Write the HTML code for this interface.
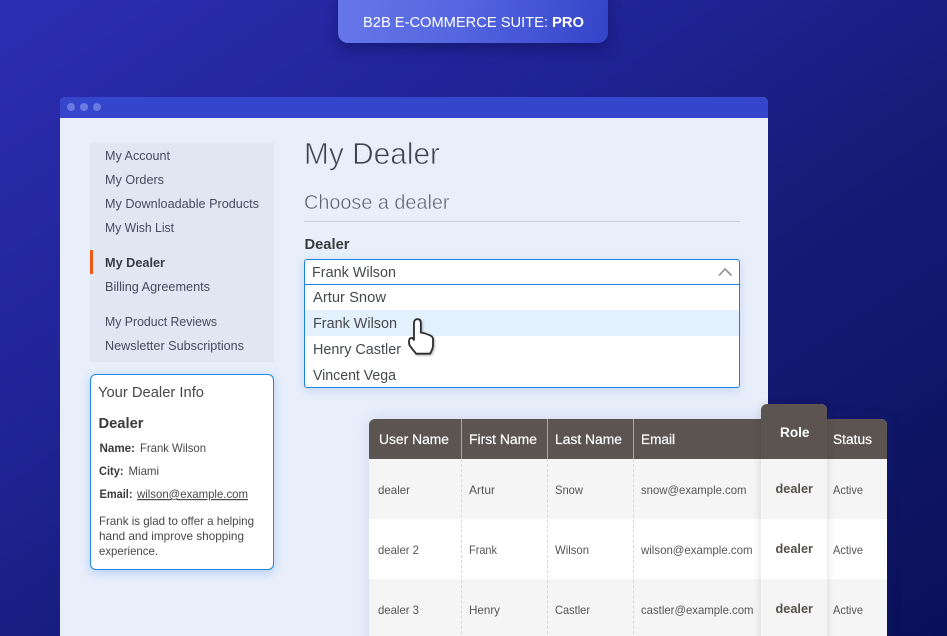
<!DOCTYPE html>
<html lang="en"><head><meta charset="utf-8"><title>B2B E-Commerce Suite</title>
<style>
html,body{margin:0;padding:0;width:947px;height:636px;overflow:hidden}
body{position:relative;background:linear-gradient(to bottom right,#2c2eb2 0%,#1d2290 40%,#161c78 58%,#0a1058 100%)}
div{position:absolute;box-sizing:border-box}
svg{position:absolute;left:0;top:0}
text{font-family:"Liberation Sans",sans-serif;white-space:pre}
.s{font-size:13px;fill:#454b5c}
.o{font-size:14.5px;fill:#45484f}
.t{font-size:12px;fill:#555}
.h{font-size:13.5px;fill:#fff;stroke:#fff;stroke-width:.2}
.r{font-size:12.5px;font-weight:bold;fill:#55504c}
.d{font-size:12px;fill:#484848}
.db{font-size:12px;fill:#3a3a3a;font-weight:bold}
</style></head><body>
<div style="left:338px;top:-10px;width:270px;height:53px;border-radius:10px;background:linear-gradient(100deg,#6777ea 0%,#5566e0 45%,#3344c9 100%);box-shadow:0 6px 14px rgba(8,12,70,.45)"></div>

<div style="left:60px;top:97px;width:708px;height:560px;background:#e8effb;border-radius:6px 6px 0 0;overflow:hidden">
  <div style="left:0;top:0;width:708px;height:21px;background:#3546cd"></div>
  <div style="left:7px;top:6px;width:8px;height:8px;border-radius:50%;background:#6b79e2"></div>
  <div style="left:20px;top:6px;width:8px;height:8px;border-radius:50%;background:#6b79e2"></div>
  <div style="left:33px;top:6px;width:8px;height:8px;border-radius:50%;background:#6b79e2"></div>
</div>

<div style="left:90px;top:143px;width:184px;height:219px;background:#e0e6f2"></div>
<div style="left:90px;top:250px;width:3px;height:24px;background:#ee5a14"></div>

<div style="left:90px;top:374px;width:184px;height:196px;background:#fff;border:1px solid #1f88e3;border-radius:6px;box-shadow:0 3px 10px rgba(60,130,230,.3)"></div>

<div style="left:304px;top:221px;width:436px;height:1px;background:#c9ced9"></div>

<div style="left:304px;top:259px;width:436px;height:129px;background:#fff;border:1px solid #1c82e0;border-radius:3px;box-shadow:0 3px 10px rgba(60,110,200,.18)"></div>
<div style="left:304px;top:284px;width:436px;height:1px;background:#1c82e0"></div>
<div style="left:305px;top:310px;width:434px;height:26px;background:#e3f1fd"></div>

<div style="left:369px;top:419px;width:518px;height:240px;background:#fff;border-radius:6px 6px 0 0;overflow:hidden;box-shadow:0 0 16px rgba(40,60,130,.13)">
  <div style="left:0;top:0;width:518px;height:40px;background:#5c5450"></div>
  <div style="left:0;top:40px;width:518px;height:60px;background:#f5f5f5"></div>
  <div style="left:0;top:160px;width:518px;height:60px;background:#f5f5f5"></div>
  <div style="left:92px;top:0;width:1px;height:40px;background:#aaa6a3"></div>
  <div style="left:178px;top:0;width:1px;height:40px;background:#aaa6a3"></div>
  <div style="left:264px;top:0;width:1px;height:40px;background:#aaa6a3"></div>
  <div style="left:92px;top:40px;height:200px;border-left:1px dashed #d8d8d8"></div>
  <div style="left:178px;top:40px;height:200px;border-left:1px dashed #d8d8d8"></div>
  <div style="left:264px;top:40px;height:200px;border-left:1px dashed #d8d8d8"></div>
</div>

<div style="left:761px;top:404px;width:66px;height:260px;border-radius:6px 6px 0 0;overflow:hidden;box-shadow:0 0 9px rgba(0,0,0,.14);background:#fff">
  <div style="left:0;top:0;width:66px;height:55px;background:#5c5450"></div>
  <div style="left:0;top:55px;width:66px;height:60px;background:#f5f5f5"></div>
  <div style="left:0;top:175px;width:66px;height:60px;background:#f5f5f5"></div>
</div>

<svg width="947" height="636" viewBox="0 0 947 636" xmlns="http://www.w3.org/2000/svg">
<text x="363" y="27" font-size="15" fill="#fff" textLength="185" lengthAdjust="spacingAndGlyphs">B2B E-COMMERCE SUITE:</text>
<text x="552" y="27" font-size="15" font-weight="bold" fill="#fff" textLength="32" lengthAdjust="spacingAndGlyphs">PRO</text>

<text class="s" x="105" y="160" textLength="65" lengthAdjust="spacingAndGlyphs">My Account</text>
<text class="s" x="105" y="184" textLength="59" lengthAdjust="spacingAndGlyphs">My Orders</text>
<text class="s" x="105" y="208" textLength="154" lengthAdjust="spacingAndGlyphs">My Downloadable Products</text>
<text class="s" x="105" y="232" textLength="69" lengthAdjust="spacingAndGlyphs">My Wish List</text>
<text class="s" x="105" y="267" font-weight="bold" style="fill:#363b4a" textLength="60" lengthAdjust="spacingAndGlyphs">My Dealer</text>
<text class="s" x="105" y="291" textLength="105" lengthAdjust="spacingAndGlyphs">Billing Agreements</text>
<text class="s" x="105" y="326" textLength="112" lengthAdjust="spacingAndGlyphs">My Product Reviews</text>
<text class="s" x="105" y="350" textLength="139" lengthAdjust="spacingAndGlyphs">Newsletter Subscriptions</text>

<text x="98" y="397" font-size="15" fill="#48484c" textLength="106" lengthAdjust="spacingAndGlyphs">Your Dealer Info</text>
<text x="98.5" y="428" font-size="15" font-weight="bold" fill="#3a3a3a" textLength="45" lengthAdjust="spacingAndGlyphs">Dealer</text>
<text class="db" x="99.5" y="452" textLength="35.5" lengthAdjust="spacingAndGlyphs">Name:</text>
<text class="d" x="140" y="452" textLength="66" lengthAdjust="spacingAndGlyphs">Frank Wilson</text>
<text class="db" x="99" y="475" textLength="24.5" lengthAdjust="spacingAndGlyphs">City:</text>
<text class="d" x="128.5" y="475" textLength="30.5" lengthAdjust="spacingAndGlyphs">Miami</text>
<text class="db" x="99.5" y="498" textLength="33" lengthAdjust="spacingAndGlyphs">Email:</text>
<text class="d" x="137" y="498" text-decoration="underline" textLength="111" lengthAdjust="spacingAndGlyphs">wilson@example.com</text>
<text class="d" x="99" y="525" textLength="155" lengthAdjust="spacingAndGlyphs">Frank is glad to offer a helping</text>
<text class="d" x="99" y="540" textLength="145" lengthAdjust="spacingAndGlyphs">hand and improve shopping</text>
<text class="d" x="99" y="555" textLength="59" lengthAdjust="spacingAndGlyphs">experience.</text>

<text x="304" y="164" font-size="31" fill="#3d4452" stroke="#e8effb" stroke-width=".7" textLength="136" lengthAdjust="spacingAndGlyphs">My Dealer</text>
<text x="304" y="209" font-size="20.5" fill="#5d6270" stroke="#e8effb" stroke-width=".45" textLength="145.5" lengthAdjust="spacingAndGlyphs">Choose a dealer</text>
<text x="304.5" y="249" font-size="14.5" font-weight="bold" fill="#3a3a3a" textLength="45" lengthAdjust="spacingAndGlyphs">Dealer</text>

<text class="o" x="312" y="277" textLength="84" lengthAdjust="spacingAndGlyphs">Frank Wilson</text>
<text class="o" x="313" y="302" textLength="73" lengthAdjust="spacingAndGlyphs">Artur Snow</text>
<text class="o" x="313" y="328" textLength="84" lengthAdjust="spacingAndGlyphs">Frank Wilson</text>
<text class="o" x="313" y="354" textLength="88" lengthAdjust="spacingAndGlyphs">Henry Castler</text>
<text class="o" x="313" y="380" textLength="83" lengthAdjust="spacingAndGlyphs">Vincent Vega</text>
<path d="M719 275.5L725 269L731.5 275.5" fill="none" stroke="#8f8f8f" stroke-width="1.6"/>

<path d="M414 340V323c0-2.5 1.5-3.8 3.5-3.8s3.3 1.3 3.3 3.8V332.5c3 .4 6.5 1.5 9.5 3 1.8.9 2.7 1.8 2.7 3.8v5.7c0 3-1 5-2 7l-1 1.7H416c-.8-1.5-2-2.7-3.5-4.5l-2.5-3.3c-.9-1.3-1-2.5-1-4.2 0-1.6.5-3 1.5-3.5 1.6-.7 2.8.5 3.5 1.8z" fill="#fff" stroke="#2c2c2c" stroke-width="1.8" stroke-linejoin="round" style="filter:drop-shadow(1px 1.5px 1px rgba(0,0,0,.3))"/>

<text class="h" x="379" y="444" textLength="70" lengthAdjust="spacingAndGlyphs">User Name</text>
<text class="h" x="469" y="444" textLength="68" lengthAdjust="spacingAndGlyphs">First Name</text>
<text class="h" x="555" y="444" textLength="67" lengthAdjust="spacingAndGlyphs">Last Name</text>
<text class="h" x="641" y="444" textLength="34" lengthAdjust="spacingAndGlyphs">Email</text>
<text x="780" y="437" font-size="13.5" font-weight="bold" fill="#fff" textLength="29.5" lengthAdjust="spacingAndGlyphs">Role</text>
<text class="h" x="833" y="444" textLength="39" lengthAdjust="spacingAndGlyphs">Status</text>

<text class="t" x="378" y="494" textLength="32" lengthAdjust="spacingAndGlyphs">dealer</text>
<text class="t" x="469" y="494" textLength="26" lengthAdjust="spacingAndGlyphs">Artur</text>
<text class="t" x="555" y="494" textLength="28" lengthAdjust="spacingAndGlyphs">Snow</text>
<text class="t" x="641" y="494" textLength="105.5" lengthAdjust="spacingAndGlyphs">snow@example.com</text>
<text class="r" x="775.5" y="493" textLength="37.5" lengthAdjust="spacingAndGlyphs">dealer</text>
<text class="t" x="833" y="494" textLength="30" lengthAdjust="spacingAndGlyphs">Active</text>

<text class="t" x="378" y="554" textLength="41" lengthAdjust="spacingAndGlyphs">dealer 2</text>
<text class="t" x="469" y="554" textLength="28" lengthAdjust="spacingAndGlyphs">Frank</text>
<text class="t" x="555" y="554" textLength="34" lengthAdjust="spacingAndGlyphs">Wilson</text>
<text class="t" x="641" y="554" textLength="111.5" lengthAdjust="spacingAndGlyphs">wilson@example.com</text>
<text class="r" x="775.5" y="553" textLength="37.5" lengthAdjust="spacingAndGlyphs">dealer</text>
<text class="t" x="833" y="554" textLength="30" lengthAdjust="spacingAndGlyphs">Active</text>

<text class="t" x="378" y="614" textLength="41" lengthAdjust="spacingAndGlyphs">dealer 3</text>
<text class="t" x="469" y="614" textLength="31" lengthAdjust="spacingAndGlyphs">Henry</text>
<text class="t" x="555" y="614" textLength="35" lengthAdjust="spacingAndGlyphs">Castler</text>
<text class="t" x="641" y="614" textLength="112.5" lengthAdjust="spacingAndGlyphs">castler@example.com</text>
<text class="r" x="775.5" y="613" textLength="37.5" lengthAdjust="spacingAndGlyphs">dealer</text>
<text class="t" x="833" y="614" textLength="30" lengthAdjust="spacingAndGlyphs">Active</text>
</svg>
</body></html>
